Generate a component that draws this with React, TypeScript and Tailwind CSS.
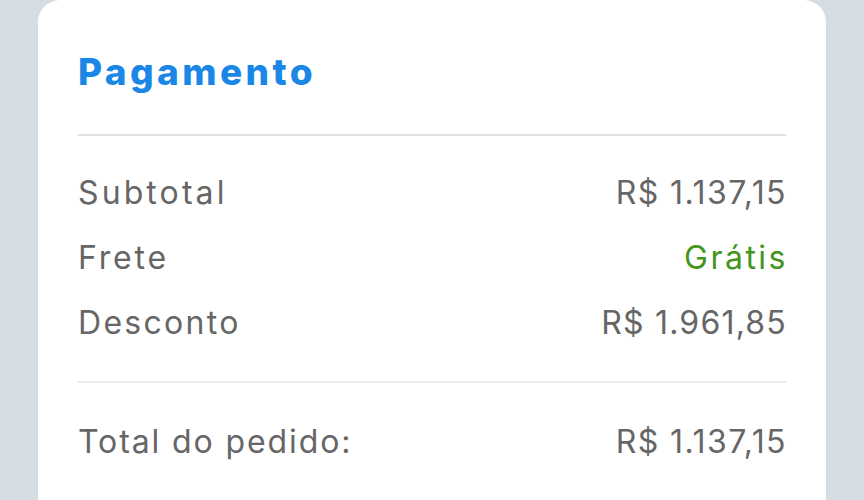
export default function App() {
  const rows = [
    { label: "Subtotal", value: "R$ 1.137,15", lt: "tracking-[3.1px]", vt: "tracking-[1.45px]", green: false },
    { label: "Frete", value: "Grátis", lt: "tracking-[2.8px]", vt: "tracking-[2.5px]", green: true },
    { label: "Desconto", value: "R$ 1.961,85", lt: "tracking-[2.3px]", vt: "tracking-[1.2px]", green: false },
  ];
  return (
    <div className="w-[864px] h-[500px] overflow-hidden bg-[#d5dce2] px-[38px]" style={{ fontFamily: 'Inter, sans-serif' }}>
      <div className="bg-white rounded-t-[22px] h-[520px] px-[40px]">
        <div className="h-[134px] flex items-center pt-[10px]">
          <h2 className="text-[37px] font-extrabold text-[#1a87e6] tracking-[3.4px]">Pagamento</h2>
        </div>
        <div className="h-[2px] bg-[#e0e0e0]" />
        <div className="pt-[40px] pb-[42px] flex flex-col gap-[32px]">
          {rows.map((r) => (
            <div key={r.label} className="flex justify-between items-center h-[33px] text-[32px] text-[#666666]">
              <span className={r.lt}>{r.label}</span>
              <span className={r.green ? `text-[#44951e] ${r.vt} -mr-[2px]` : `${r.vt} -mr-[1px]`}>{r.value}</span>
            </div>
          ))}
        </div>
        <div className="h-[2px] bg-[#ebebeb]" />
        <div className="pt-[42px] flex justify-between items-center h-[33px] text-[32px] text-[#666666] box-content">
          <span className="tracking-[1.9px]">Total do pedido:</span>
          <span className="tracking-[1.45px] -mr-[1px]">R$ 1.137,15</span>
        </div>
      </div>
    </div>
  );
}
